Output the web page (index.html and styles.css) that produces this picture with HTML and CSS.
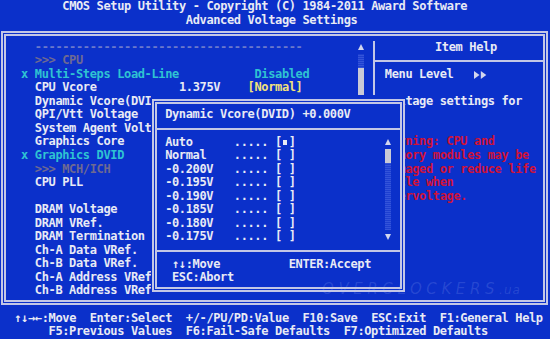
FILE: index.html
```html
<!DOCTYPE html>
<html>
<head>
<meta charset="utf-8">
<title>CMOS Setup Utility</title>
<link rel="stylesheet" href="styles.css">
</head>
<body>
<div class="screen">
  <header class="title">
    <div class="line t1">CMOS Setup Utility - Copyright (C) 1984-2011 Award Software</div>
    <div class="line t2">Advanced Voltage Settings</div>
  </header>

  <main class="frame">
    <section class="settings">
      <div class="list">
        <div class="line dash">  ---------------------------------------</div>
        <div class="line grp">  &gt;&gt;&gt; CPU</div>
        <div class="line cyan">x Multi-Steps Load-Line           Disabled</div>
        <div class="line">  CPU Vcore            1.375V    <span class="yel">[Normal]</span></div>
        <div class="line">  Dynamic Vcore(DVID)</div>
        <div class="line">  QPI/Vtt Voltage</div>
        <div class="line">  System Agent Voltage</div>
        <div class="line">  Graphics Core</div>
        <div class="line cyan">x Graphics DVID</div>
        <div class="line grp">  &gt;&gt;&gt; MCH/ICH</div>
        <div class="line">  CPU PLL</div>
        <div class="line"> </div>
        <div class="line">  DRAM Voltage</div>
        <div class="line">  DRAM VRef.</div>
        <div class="line">  DRAM Termination</div>
        <div class="line">  Ch-A Data VRef.</div>
        <div class="line">  Ch-B Data VRef.</div>
        <div class="line">  Ch-A Address VRef.</div>
        <div class="line">  Ch-B Address VRef.</div>
      </div>
      <div class="vscroll">
        <div class="sb-arrow"><svg width="6" height="6" viewBox="0 0 6 6"><polygon points="0,6 3,0 6,6" class="tri"/></svg></div>
        <div class="sb-track one"></div>
        <div class="sb-thumb two"></div>
        <div class="sb-track rest"></div>
      </div>
    </section>

    <aside class="help">
      <div class="line help-head">Item Help</div>
      <div class="hsep"></div>
      <div class="line hrow">Menu Level   <svg class="lvl" width="14" height="8" viewBox="0 0 14 8"><polygon points="0,0 5.5,4 0,8" class="tri"/><polygon points="6.8,0 12.3,4 6.8,8" class="tri"/></svg></div>
      <div class="line hrow"> </div>
      <div class="line hrow">Voltage settings for</div>
      <div class="line hrow"> </div>
      <div class="line hrow"> </div>
      <div class="line hrow red">Warning: CPU and</div>
      <div class="line hrow red">memory modules may be</div>
      <div class="line hrow red">damaged or reduce life</div>
      <div class="line hrow red">cycle when</div>
      <div class="line hrow red">overvoltage.</div>
    </aside>
  </main>

  <footer class="keys">
    <div class="line k1">↑↓→←:Move  Enter:Select  +/-/PU/PD:Value  F10:Save  ESC:Exit  F1:General Help</div>
    <div class="line k2">F5:Previous Values  F6:Fail-Safe Defaults  F7:Optimized Defaults</div>
  </footer>

  <div class="dialog">
    <div class="dbox">
      <div class="line dtitle">Dynamic Vcore(DVID) +0.000V</div>
      <div class="dsep"></div>
      <div class="dbody">
        <div class="opts">
          <div class="line">Auto      ..... [<span class="sel"> </span>]</div>
          <div class="line">Normal    ..... [ ]</div>
          <div class="line">-0.200V   ..... [ ]</div>
          <div class="line">-0.195V   ..... [ ]</div>
          <div class="line">-0.190V   ..... [ ]</div>
          <div class="line">-0.185V   ..... [ ]</div>
          <div class="line">-0.180V   ..... [ ]</div>
          <div class="line">-0.175V   ..... [ ]</div>
        </div>
        <div class="vscroll dscroll">
          <div class="sb-arrow"><svg width="6" height="6" viewBox="0 0 6 6"><polygon points="0,6 3,0 6,6" class="tri"/></svg></div>
          <div class="sb-thumb"></div>
          <div class="sb-track five"></div>
          <div class="sb-arrow"><svg width="6" height="6" viewBox="0 0 6 6"><polygon points="0,0 6,0 3,6" class="tri"/></svg></div>
        </div>
      </div>
      <div class="dsep"></div>
      <div class="line dkeys">↑↓:Move          ENTER:Accept</div>
      <div class="line dkeys">ESC:Abort</div>
    </div>
  </div>

  <div class="watermark">OVERCLOCKERS<span class="ua">.ua</span></div>
</div>
</body>
</html>
```

FILE: styles.css
```css
* {
  box-sizing: border-box;
  margin: 0;
  padding: 0;
}

:root {
  --cw: 6.863px;
  --rh: 13.56px;
  --bg: #0b30ca;
  --rule: #c3c7e6;
}

html, body {
  width: 550px;
  height: 339px;
  overflow: hidden;
}

body {
  background: var(--bg);
  color: #e8eaf5;
  font-family: "DejaVu Sans Mono", "Liberation Mono", monospace;
  font-weight: bold;
  font-size: 12px;
  letter-spacing: -0.361px;
  line-height: var(--rh);
}

.screen {
  position: relative;
  width: 550px;
  height: 339px;
  padding-left: 0.5px;
  background: var(--bg);
}

.line {
  white-space: pre;
  height: var(--rh);
}

/* title */
.t1 { padding-left: calc(var(--cw) * 9); }
.t2 { padding-left: calc(var(--cw) * 27); }

/* main frame */
.frame {
  display: flex;
  width: 547px;
  margin: 3.88px 0 0 0.5px;
  border: 5px double var(--rule);
  padding: 4.68px 0 2.2px 0;
}

.settings {
  display: flex;
  width: 367.3px;
  padding-left: 15.08px;
}

.list {
  width: calc(var(--cw) * 49);
}

.dash { color: #6a78cc; }
.grp { color: #6f6a92; }
.cyan { color: #2fc3d2; }
.yel { color: #f2e27c; }
.red { color: #d01238; }

/* scrollbars */
.vscroll {
  display: flex;
  flex-direction: column;
  width: var(--cw);
}

.sb-arrow {
  height: var(--rh);
  display: flex;
  align-items: center;
  justify-content: center;
}

.tri { fill: #d2d6ee; }

.sb-track {
  margin: 0 0.4px;
  background: repeating-linear-gradient(0deg, #3454da 0 1px, #1d3fd0 1px 2px);
}

.sb-track.one { height: var(--rh); }
.sb-track.five { height: calc(var(--rh) * 5); }
.sb-track.rest { flex: 1; }

.sb-thumb {
  height: var(--rh);
  margin: 0 0.4px;
  background: #c9cad6;
}

.sb-thumb.two { height: calc(var(--rh) * 2); }

/* help panel */
.help {
  flex: 1;
  border-left: 2px solid var(--rule);
}

.help-head {
  padding-left: 59.7px;
}

.hsep {
  height: var(--rh);
  background: linear-gradient(transparent 5.8px, var(--rule) 5.8px 7.6px, transparent 7.6px);
}

.hrow {
  padding-left: 9.5px;
}

.lvl {
  vertical-align: -1px;
}

/* footer keys */
.keys {
  margin-top: 6.36px;
}

.k1 { padding-left: calc(var(--cw) * 2); }
.k2 { padding-left: calc(var(--cw) * 7); }

/* popup dialog */
.dialog {
  position: absolute;
  left: 151.49px;
  top: 94.92px;
  width: 253.93px;
  height: 203.4px;
  background: var(--bg);
  padding: 3.8px 0.3px 6.6px 0.8px;
}

.dbox {
  height: 100%;
  border: 5px double var(--rule);
  padding: 4.78px 0 1.94px 1px;
}

.dtitle {
  padding-left: var(--cw);
}

.dsep {
  height: var(--rh);
  margin-left: -1px;
  background: linear-gradient(transparent 5.8px, var(--rule) 5.8px 7.6px, transparent 7.6px);
}

.dbody {
  display: flex;
}

.opts {
  width: calc(var(--cw) * 33);
  padding-left: var(--cw);
}

.sel {
  display: inline-block;
  width: var(--cw);
  background: linear-gradient(#e8eaf5, #e8eaf5) 1.4px center / 4px 5px no-repeat;
}

.dkeys {
  padding-left: calc(var(--cw) * 2);
}

/* photo watermark */
.watermark {
  position: absolute;
  left: 322px;
  top: 281px;
  font-family: "DejaVu Sans", sans-serif;
  font-weight: normal;
  font-style: italic;
  font-size: 15px;
  line-height: 16px;
  letter-spacing: 4.6px;
  color: rgba(185, 200, 255, 0.16);
  white-space: pre;
}

.watermark .ua {
  font-size: 12px;
  letter-spacing: 1px;
}
```
